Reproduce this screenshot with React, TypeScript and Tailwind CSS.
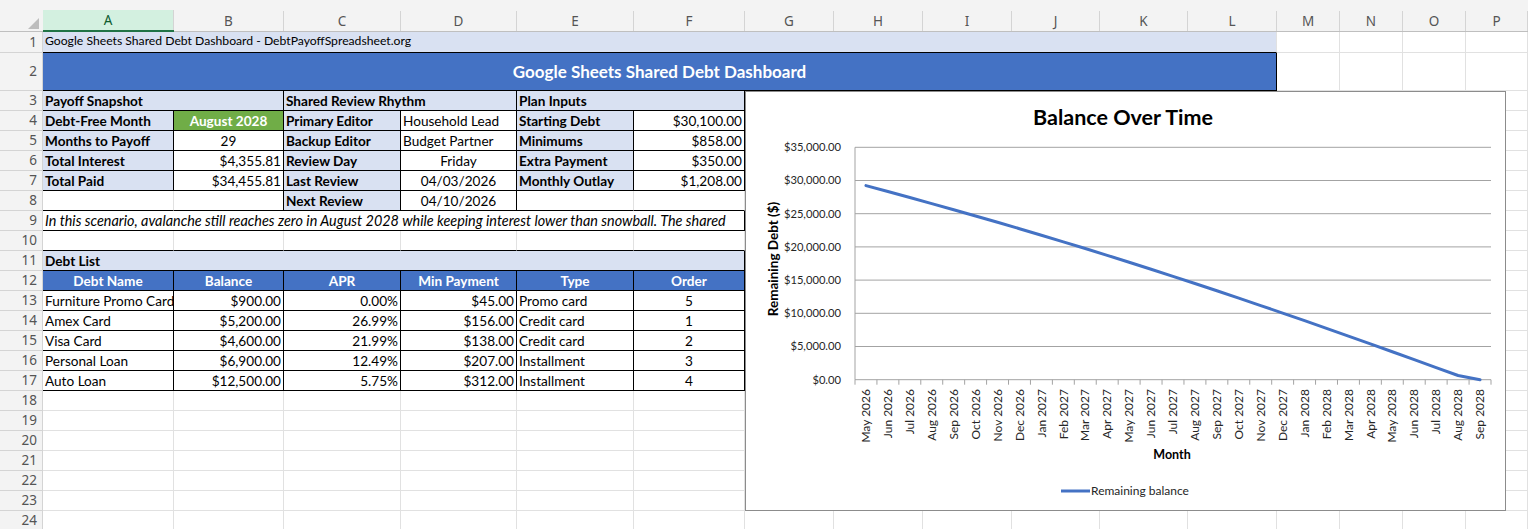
import React from "react";

type C = { t?: string; s?: number; bd?: boolean; a?: "l" | "c" | "r"; k?: string };

const COLS = ["A", "B", "C", "D", "E", "F", "G", "H", "I", "J", "K", "L", "M", "N", "O", "P"];
const SPAN: Record<number, string> = { 1: "", 2: "col-span-2", 6: "col-span-6", 12: "col-span-12" };

const LB = "bg-[#d9e1f2] font-bold";
const HD = "bg-[#4472c4] text-white font-bold";

const blank = (n: number): C[] => Array.from({ length: n }, () => ({}));

const rows: C[][] = [
  [{ t: "Google Sheets Shared Debt Dashboard - DebtPayoffSpreadsheet.org", s: 12, k: "bg-[#d9e1f2] text-[12.2px] items-end pb-[2px]" }, ...blank(4)],
  [{ t: "Google Sheets Shared Debt Dashboard", s: 12, bd: true, a: "c", k: "bg-[#4472c4] text-white font-bold text-[17px]" }, ...blank(4)],
  [
    { t: "Payoff Snapshot", s: 2, bd: true, k: LB },
    { t: "Shared Review Rhythm", s: 2, bd: true, k: LB },
    { t: "Plan Inputs", s: 2, bd: true, k: LB },
    ...blank(10),
  ],
  [
    { t: "Debt-Free Month", bd: true, k: LB },
    { t: "August 2028", bd: true, a: "c", k: "bg-[#70ad47] text-white font-bold" },
    { t: "Primary Editor", bd: true, k: LB },
    { t: "Household Lead", bd: true },
    { t: "Starting Debt", bd: true, k: LB },
    { t: "$30,100.00", bd: true, a: "r" },
    ...blank(10),
  ],
  [
    { t: "Months to Payoff", bd: true, k: LB },
    { t: "29", bd: true, a: "c" },
    { t: "Backup Editor", bd: true, k: LB },
    { t: "Budget Partner", bd: true },
    { t: "Minimums", bd: true, k: LB },
    { t: "$858.00", bd: true, a: "r" },
    ...blank(10),
  ],
  [
    { t: "Total Interest", bd: true, k: LB },
    { t: "$4,355.81", bd: true, a: "r" },
    { t: "Review Day", bd: true, k: LB },
    { t: "Friday", bd: true, a: "c" },
    { t: "Extra Payment", bd: true, k: LB },
    { t: "$350.00", bd: true, a: "r" },
    ...blank(10),
  ],
  [
    { t: "Total Paid", bd: true, k: LB },
    { t: "$34,455.81", bd: true, a: "r" },
    { t: "Last Review", bd: true, k: LB },
    { t: "04/03/2026", bd: true, a: "c" },
    { t: "Monthly Outlay", bd: true, k: LB },
    { t: "$1,208.00", bd: true, a: "r" },
    ...blank(10),
  ],
  [{}, {}, { t: "Next Review", bd: true, k: LB }, { t: "04/10/2026", bd: true, a: "c" }, ...blank(12)],
  [
    {
      t: "In this scenario, avalanche still reaches zero in August 2028 while keeping interest lower than snowball. The shared",
      s: 6,
      bd: true,
      k: "italic text-[14.4px]",
    },
    ...blank(10),
  ],
  blank(16),
  [{ t: "Debt List", s: 6, bd: true, k: LB }, ...blank(10)],
  [
    ...["Debt Name", "Balance", "APR", "Min Payment", "Type", "Order"].map((t) => ({ t, bd: true, a: "c" as const, k: HD })),
    ...blank(10),
  ],
  ...[
    ["Furniture Promo Card", "$900.00", "0.00%", "$45.00", "Promo card", "5"],
    ["Amex Card", "$5,200.00", "26.99%", "$156.00", "Credit card", "1"],
    ["Visa Card", "$4,600.00", "21.99%", "$138.00", "Credit card", "2"],
    ["Personal Loan", "$6,900.00", "12.49%", "$207.00", "Installment", "3"],
    ["Auto Loan", "$12,500.00", "5.75%", "$312.00", "Installment", "4"],
  ].map((r) => [
    { t: r[0], bd: true },
    { t: r[1], bd: true, a: "r" as const },
    { t: r[2], bd: true, a: "r" as const },
    { t: r[3], bd: true, a: "r" as const },
    { t: r[4], bd: true },
    { t: r[5], bd: true, a: "c" as const },
    ...blank(10),
  ]),
  ...Array.from({ length: 7 }, () => blank(16)),
];

// column index of each cell, per row
const starts = rows.map((r) => {
  let c = 0;
  return r.map((cell) => {
    const s = c;
    c += cell.s ?? 1;
    return s;
  });
});

function below(ri: number, c0: number, span: number) {
  const next = rows[ri + 1];
  if (!next) return false;
  return next.some((cell, i) => {
    const s = starts[ri + 1][i];
    const e = s + (cell.s ?? 1);
    return cell.bd && s < c0 + span && e > c0;
  });
}

function schedule() {
  const debts = [
    { b: 900, r: 0, m: 45 },
    { b: 5200, r: 0.2699, m: 156 },
    { b: 4600, r: 0.2199, m: 138 },
    { b: 6900, r: 0.1249, m: 207 },
    { b: 12500, r: 0.0575, m: 312 },
  ];
  const out: number[] = [];
  for (let i = 0; i < 29; i++) {
    debts.forEach((d) => (d.b += (d.b * d.r) / 12));
    let cash = 1208;
    debts.forEach((d) => {
      const p = Math.min(d.m, d.b);
      d.b -= p;
      cash -= p;
    });
    [...debts]
      .sort((a, b) => b.r - a.r)
      .forEach((d) => {
        const p = Math.min(cash, d.b);
        d.b -= p;
        cash -= p;
      });
    out.push(debts.reduce((s, d) => s + d.b, 0));
  }
  return out;
}

const MONTHS = ["Jan", "Feb", "Mar", "Apr", "May", "Jun", "Jul", "Aug", "Sep", "Oct", "Nov", "Dec"];
const labels = Array.from({ length: 29 }, (_, i) => {
  const m = 4 + i;
  return `${MONTHS[m % 12]} ${2026 + Math.floor(m / 12)}`;
});

function Chart() {
  const data = schedule();
  const x0 = 109;
  const x1 = 745;
  const yTop = 55.3;
  const step = 33.2;
  const y0 = yTop + step * 7;
  const cw = (x1 - x0) / 29;
  const pts = data.map((v, i) => `${x0 + (i + 0.5) * cw},${y0 - (v / 5000) * step}`).join(" ");
  return (
    <div className="absolute left-[745px] top-[91px] w-[761px] h-[420px] border border-[#8c8c8c] bg-white">
      <svg width="759" height="418" className="block">
        <text x="377" y="33" textAnchor="middle" fontSize="21.5" fontWeight="700" fill="#000">
          Balance Over Time
        </text>
        {Array.from({ length: 8 }, (_, i) => {
          const y = yTop + i * step;
          return (
            <g key={i}>
              <line x1={x0} x2={x1} y1={y} y2={y} stroke="#a3a3a3" strokeWidth="1" />
              <text x="95" y={y} dy="0.35em" textAnchor="end" fontSize="11.2" fill="#262626">
                {`$${((7 - i) * 5000).toLocaleString("en-US")}.00`}
              </text>
            </g>
          );
        })}
        <line x1={x0} x2={x0} y1={yTop} y2={y0} stroke="#a3a3a3" />
        {Array.from({ length: 30 }, (_, i) => (
          <line key={i} x1={x0 + i * cw} x2={x0 + i * cw} y1={y0} y2={y0 + 5} stroke="#a3a3a3" />
        ))}
        {labels.map((l, i) => {
          const cx = x0 + (i + 0.5) * cw;
          return (
            <text key={l} x={cx} y="297" dy="0.35em" textAnchor="end" fontSize="12" fill="#262626" transform={`rotate(-90 ${cx} 297)`}>
              {l}
            </text>
          );
        })}
        <polyline points={pts} fill="none" stroke="#4472c4" strokeWidth="3" strokeLinejoin="round" strokeLinecap="round" />
        <text x="426" y="363" dy="0.35em" textAnchor="middle" fontSize="12.5" fontWeight="700" fill="#000">
          Month
        </text>
        <text x="27" y="167" dy="0.35em" textAnchor="middle" fontSize="13.5" fontWeight="700" fill="#000" transform="rotate(-90 27 167)">
          Remaining Debt ($)
        </text>
        <line x1="315" x2="344" y1="399" y2="399" stroke="#4472c4" strokeWidth="3" />
        <text x="345" y="399" dy="0.35em" fontSize="12" fill="#262626">
          Remaining balance
        </text>
      </svg>
    </div>
  );
}

export default function App() {
  return (
    <div className="relative w-[1528px] h-[529px] overflow-hidden bg-white font-[Lato,sans-serif] text-[13.6px] text-black">
      <div className="grid grid-cols-[43px_131px_110px_117px_116px_117px_111px_89px_89px_89px_88px_88px_89px_63px_63px_63px_62px] grid-rows-[32px_21px_38px_repeat(22,20px)]">
        {/* corner */}
        <div className="relative bg-[#f3f3f3] border-b border-[#bfbfbf]">
          <svg className="absolute left-[28px] top-[18px]" width="12" height="12">
            <polygon points="11,0 11,11 0,11" fill="#bdbdbd" />
          </svg>
        </div>
        {COLS.map((c, i) => (
          <div
            key={c}
            className={`flex flex-col bg-[#f3f3f3] border-b ${i === 0 ? "border-b-[#217346] border-b-2" : "border-b-[#bfbfbf]"}`}
          >
            <div className="h-[14px]" />
            <div
              className={`flex-1 flex items-center justify-center border-r border-[#d4d4d4] font-[Noto_Sans,sans-serif] text-[13.5px] ${
                i === 0 ? "bg-[#d3f0e0] text-[#0e5c2f]" : "text-[#555]"
              }`}
            >
              {c}
            </div>
          </div>
        ))}
        {rows.map((r, ri) => (
          <React.Fragment key={ri}>
            <div className="flex items-center justify-end pr-[5px] bg-[#f3f3f3] border-r border-b border-[#d4d4d4] font-[Noto_Sans,sans-serif] text-[13.5px] text-[#555]">
              {ri + 1}
            </div>
            {r.map((cell, ci) => {
              const span = cell.s ?? 1;
              const next = r[ci + 1];
              const right = cell.bd || (next && next.bd);
              const bottom = cell.bd || below(ri, starts[ri][ci], span);
              const align = cell.a === "c" ? "justify-center" : cell.a === "r" ? "justify-end" : "justify-start";
              return (
                <div
                  key={ci}
                  className={`${SPAN[span]} flex ${cell.k?.includes("items-end") ? "" : "items-center pt-[1px]"} overflow-hidden whitespace-nowrap px-[2px] border-r border-b ${
                    right ? "border-r-black" : "border-r-[#e1e1e1]"
                  } ${bottom ? "border-b-black" : "border-b-[#e1e1e1]"} ${align} ${cell.k ?? ""}`}
                >
                  {cell.t}
                </div>
              );
            })}
          </React.Fragment>
        ))}
      </div>
      <Chart />
    </div>
  );
}
